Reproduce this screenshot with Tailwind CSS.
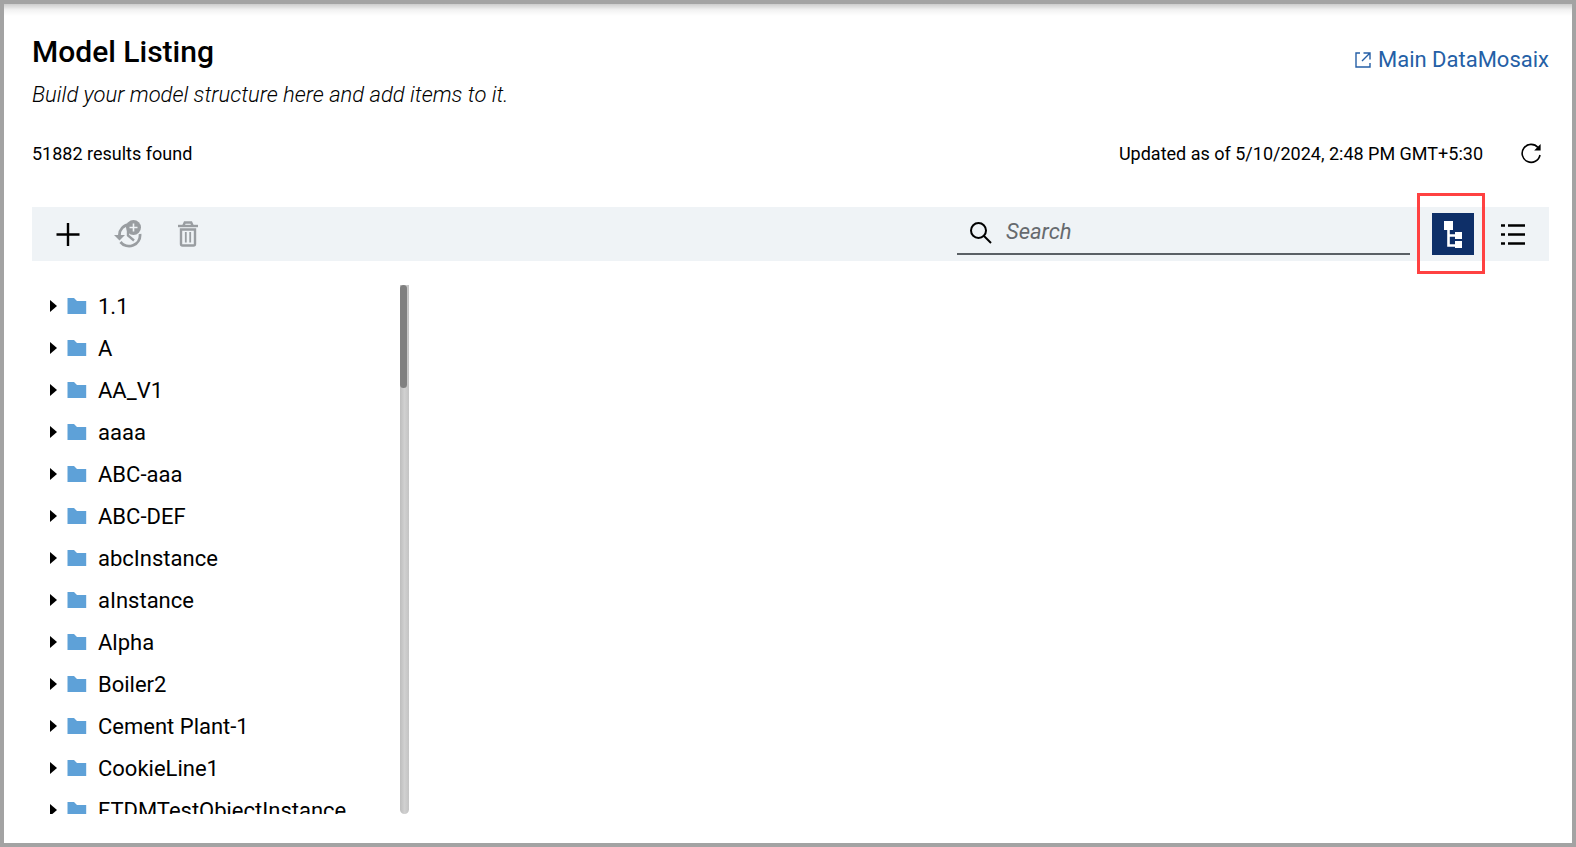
<!DOCTYPE html>
<html lang="en">
  <head>
    <meta charset="UTF-8" />
    <meta name="viewport" content="width=device-width, initial-scale=1.0" />
    <title>Model Listing</title>
    <script src="https://cdn.jsdelivr.net/npm/@tailwindcss/browser@4"></script>
  </head>
  <body class="bg-white text-black font-[Roboto,'Liberation_Sans',sans-serif]">
    <div
      class="h-screen flex flex-col border-4 border-[#a3a3a3] pl-7 pr-[23px] pb-[29px] pt-7 relative overflow-hidden"
    >
      <div
        class="absolute inset-x-0 top-0 h-3 bg-linear-to-b from-black/20 via-black/5 to-transparent"
      ></div>

      <header class="flex justify-between items-start">
        <div>
          <h1 class="text-[30px] leading-10 font-medium">Model Listing</h1>
          <p class="text-[22px] leading-8 mt-[7px] italic font-light">
            Build your model structure here and add items to it.
          </p>
        </div>
        <a
          href="#"
          class="flex items-center gap-1.5 mt-3 text-[22px] leading-8 text-[#255fa6]"
        >
          <svg
            class="size-[18px]"
            viewBox="0 0 18 18"
            fill="none"
            stroke="currentColor"
            stroke-width="1.4"
          >
            <path d="M6 2H2v14h14v-4" />
            <path d="M9.500 2H16v6.500M16 2L8 10" />
          </svg>
          Main DataMosaix
        </a>
      </header>

      <div class="flex items-center justify-between h-8 mt-[26px] text-[18px]">
        <p>51882 results found</p>
        <div class="flex items-center gap-9">
          <p>Updated as of 5/10/2024, 2:48 PM GMT+5:30</p>
          <button type="button" aria-label="Refresh" class="mr-1.5">
            <svg class="size-6" viewBox="0 0 24 24" fill="none">
              <path
                d="M19 6.500A9 9 0 1 0 21 14"
                stroke="currentColor"
                stroke-width="1.600"
              />
              <path d="M21.600 3v6.500H15.200z" fill="currentColor" />
            </svg>
          </button>
        </div>
      </div>

      <div class="flex items-center h-[54px] mt-[38px] bg-[#eff3f6] shrink-0">
        <div class="flex items-center gap-8 pl-[22px] text-[#999da1]">
          <button type="button" aria-label="Add" class="text-black">
            <svg
              class="size-7"
              viewBox="0 0 28 28"
              fill="none"
              stroke="currentColor"
              stroke-width="2.400"
            >
              <path d="M14 3v23M2.500 14.500h23" />
            </svg>
          </button>
          <button type="button" aria-label="Restore version">
            <svg class="size-7" viewBox="0 0 28 28" fill="none">
              <path
                d="M5.500 16A10.500 10.500 0 0 1 16 4.500M26 14a11 11 0 0 1-19.500 8"
                stroke="currentColor"
                stroke-width="2.800"
              />
              <path d="M0 15h11l-5.500 5.500z" fill="currentColor" />
              <path
                d="M14 10v5.500l6 5"
                stroke="currentColor"
                stroke-width="2.400"
              />
              <circle cx="19.500" cy="7.500" r="7.500" fill="currentColor" />
              <path
                d="M19.500 3.500v8M15.500 7.500h8"
                stroke="#eff3f6"
                stroke-width="1.600"
              />
            </svg>
          </button>
          <button type="button" aria-label="Delete">
            <svg
              class="size-7"
              viewBox="0 0 28 28"
              fill="none"
              stroke="currentColor"
            >
              <path d="M4 6h20" stroke-width="2.400" />
              <path
                d="M9.500 5.500l1.300-3h6.400l1.300 3M7 9.500v14.500q0 1.500 1.500 1.500h11q1.500 0 1.500-1.500V9.500z"
                stroke-width="2.400"
              />
              <path d="M11.800 12v10.500M16.200 12v10.500" stroke-width="1.800" />
            </svg>
          </button>
        </div>

        <label
          class="flex items-center w-[453px] h-12 ml-auto self-start border-b-2 border-[#5a6065] pl-3"
        >
          <svg
            class="size-6 mt-1.5 shrink-0"
            viewBox="0 0 24 24"
            fill="none"
            stroke="currentColor"
            stroke-width="2"
          >
            <circle cx="9.500" cy="9.500" r="7.500" />
            <path d="M15 15l7 7" />
          </svg>
          <input
            type="search"
            aria-label="Search"
            placeholder="Search"
            class="w-full ml-[13px] mt-1 text-[22px] leading-8 italic outline-none placeholder:text-[#666a6e]"
          />
        </label>

        <div class="relative ml-[22px]">
          <button
            type="button"
            aria-label="Tree view"
            class="flex items-center justify-center size-[42px] bg-[#0e2f68] text-white"
          >
            <svg class="size-[42px]" viewBox="0 0 42 42" fill="none">
              <path
                d="M12 8h9v9h-9zM23 19h7v7h-7zM23 28h7v7h-7z"
                fill="currentColor"
              />
              <path
                d="M16.500 16v16.500H24M16.500 22.500H24"
                stroke="currentColor"
                stroke-width="2.600"
              />
            </svg>
          </button>
          <!-- highlight frame around the active view -->
          <div
            class="absolute -left-[15px] -right-[11px] -top-5 -bottom-[19px] border-3 border-[#ff4141] pointer-events-none"
          ></div>
        </div>
        <button type="button" aria-label="List view" class="ml-[25px] mr-[22px]">
          <svg
            class="size-7"
            viewBox="0 0 28 28"
            fill="none"
            stroke="currentColor"
            stroke-width="2.400"
          >
            <path d="M9 5.500h17M9 14.500h17M9 23.500h17" />
            <path d="M2 5.500h4M2 14.500h4M2 23.500h4" />
          </svg>
        </button>
      </div>

      <div class="flex w-[377px] flex-1 min-h-0 mt-6 overflow-hidden">
        <ul id="tree" class="flex-1 min-w-0 text-[22px]"></ul>
        <div
          class="w-[9px] bg-linear-to-r from-[#bdbdbd] via-[#d0d0d0] to-[#c4c4c4] rounded-b-full"
        >
          <div class="w-[7px] h-[103px] rounded-full bg-[#808080]"></div>
        </div>
      </div>
    </div>

    <template id="node">
      <li>
        <button
          type="button"
          class="flex items-center w-full h-[42px] pl-[18px] text-left whitespace-nowrap"
        >
          <svg class="w-[7px] h-3 mr-2.5" viewBox="0 0 7 12">
            <path d="M0 0l7 6-7 6z" fill="currentColor" />
          </svg>
          <svg class="w-5 h-4 mr-[11px]" viewBox="0 0 20 16">
            <path d="M.5 0H7l3 3h9.200v13H.5z" fill="#5ea1d8" />
          </svg>
          <span></span>
        </button>
      </li>
    </template>

    <script>
      const models = [
        "1.1",
        "A",
        "AA_V1",
        "aaaa",
        "ABC-aaa",
        "ABC-DEF",
        "abcInstance",
        "aInstance",
        "Alpha",
        "Boiler2",
        "Cement Plant-1",
        "CookieLine1",
        "FTDMTestObjectInstance",
      ];

      const tree = document.getElementById("tree");
      const node = document.getElementById("node");

      models.forEach((name) => {
        const item = node.content.cloneNode(true);
        item.querySelector("span").textContent = name;
        tree.appendChild(item);
      });
    </script>
  </body>
</html>
